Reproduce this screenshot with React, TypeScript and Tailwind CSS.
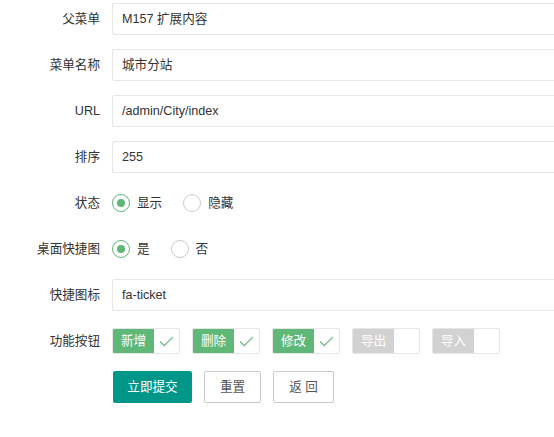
const font = "font-['Liberation_Sans','Noto_Sans_CJK_SC',sans-serif]";

function Row({ label, children }: { label: string; children: React.ReactNode }) {
  return (
    <div className="flex items-center h-[32px] mb-[14px]">
      <label className="w-[100px] shrink-0 text-right text-[12.6px] text-[#333]">{label}</label>
      <div className="ml-[12px] flex-1 flex items-center min-w-0">{children}</div>
    </div>
  );
}

function TextInput({ value }: { value: string }) {
  return (
    <div className="h-[32px] w-[460px] shrink-0 border border-[#e6e6e6] rounded-[2px] bg-white px-[9px] flex items-center text-[12.6px] text-[#333]">
      {value}
    </div>
  );
}

function Radio({ label, checked }: { label: string; checked?: boolean }) {
  return (
    <span className="inline-flex items-center mr-[21px]">
      <span
        className={
          checked
            ? "w-[18px] h-[18px] rounded-full border-[1.5px] border-[#5fb878] grid place-items-center"
            : "w-[18px] h-[18px] rounded-full border-[1.5px] border-[#c9c9c9]"
        }
      >
        {checked && <span className="w-[8px] h-[8px] rounded-full bg-[#5fb878]" />}
      </span>
      <span className="ml-[7px] text-[12.6px] text-[#333]">{label}</span>
    </span>
  );
}

function Perm({ label, on }: { label: string; on?: boolean }) {
  return (
    <span className="inline-flex h-[26px] mr-[12px] border border-[#e6e6e6] rounded-[2px] overflow-hidden bg-white">
      <span
        className={
          on
            ? "w-[41px] grid place-items-center bg-[#5fb878] text-white text-[12.6px]"
            : "w-[41px] grid place-items-center bg-[#d2d2d2] text-white text-[12.6px]"
        }
      >
        {label}
      </span>
      <span className="w-[25px] grid place-items-center">
        {on && (
          <svg viewBox="0 0 16 12" className="w-[15px] h-[11px]" fill="none" stroke="#5fb878" strokeWidth="1.2">
            <path d="M1 6l4.5 4.5L15 1" />
          </svg>
        )}
      </span>
    </span>
  );
}

export default function App() {
  return (
    <div className={`${font} w-[554px] h-[437px] bg-white pt-[3px] overflow-hidden`}>
      <Row label="父菜单"><TextInput value="M157 扩展内容" /></Row>
      <Row label="菜单名称"><TextInput value="城市分站" /></Row>
      <Row label="URL"><TextInput value="/admin/City/index" /></Row>
      <Row label="排序"><TextInput value="255" /></Row>
      <Row label="状态">
        <Radio label="显示" checked />
        <Radio label="隐藏" />
      </Row>
      <Row label="桌面快捷图">
        <Radio label="是" checked />
        <Radio label="否" />
      </Row>
      <Row label="快捷图标"><TextInput value="fa-ticket" /></Row>
      <Row label="功能按钮">
        <Perm label="新增" on />
        <Perm label="删除" on />
        <Perm label="修改" on />
        <Perm label="导出" />
        <Perm label="导入" />
      </Row>
      <div className="flex ml-[113px] gap-[12px]">
        <button className="h-[32px] w-[79px] rounded-[2px] bg-[#009688] text-white text-[12.6px]">立即提交</button>
        <button className="h-[32px] w-[57px] rounded-[2px] border border-[#c9c9c9] bg-white text-[#555] text-[12.6px]">重置</button>
        <button className="h-[32px] w-[61px] rounded-[2px] border border-[#c9c9c9] bg-white text-[#555] text-[12.6px]">返 回</button>
      </div>
    </div>
  );
}
